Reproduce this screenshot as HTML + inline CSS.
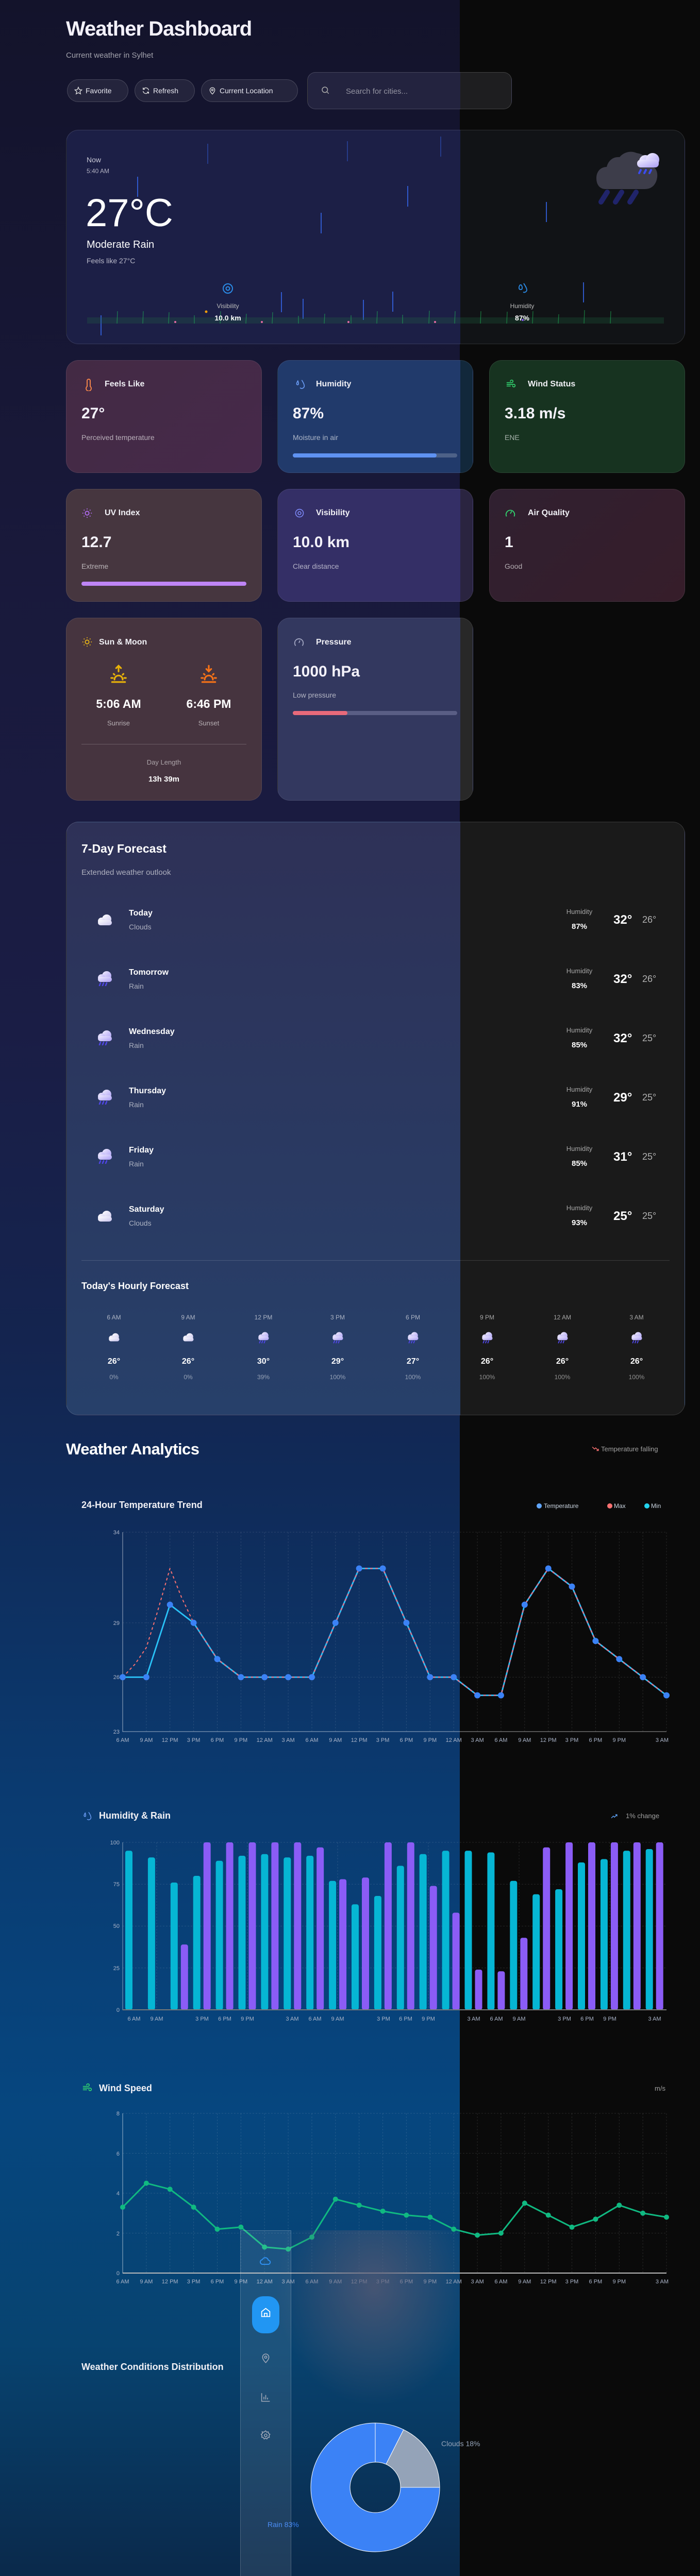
<!DOCTYPE html>
<html><head><meta charset="utf-8">
<style>
*{margin:0;padding:0;box-sizing:border-box}
html,body{width:1358px;height:5256px;overflow:hidden}
body{background:#0a0a0a;font-family:"Liberation Sans",sans-serif;color:#fff;position:relative}
.a{position:absolute;line-height:1;white-space:nowrap}
#bgl{position:absolute;left:0;top:0;width:892px;height:5256px;
background:linear-gradient(180deg,#13132b 0px,#19193b 1100px,#1a1d45 2000px,#14244f 2600px,#0f2c5b 2950px,#0a3b71 3500px,#06467f 4100px,#074370 4550px,#0a2c4f 4950px,#0b1c33 5256px)}
.card{position:absolute;border-radius:24px;border:1px solid rgba(255,255,255,0.09)}
.ct{font-size:16px;font-weight:bold;color:#f1f1f6}
.cv{font-size:30px;font-weight:bold;color:#f4f2fa}
.cs{font-size:14px;color:rgba(255,255,255,0.62)}
.bar{position:absolute;height:8px;border-radius:4px}
.btn{position:absolute;top:154px;height:44px;border-radius:22px;background:#24243c;border:1px solid rgba(255,255,255,0.16);font-size:14px;color:#e8e8f0;display:flex;align-items:center;gap:6px;padding-left:13px}
.fn{font-size:16px;font-weight:bold;color:#fff}
.fs{font-size:14px;color:rgba(255,255,255,0.6)}
.hl{font-size:13px;color:rgba(255,255,255,0.6);text-align:center;width:80px}
.hv{font-size:15px;font-weight:bold;text-align:center;width:80px}
.th{font-size:24px;font-weight:bold}
.tl{font-size:18px;color:rgba(255,255,255,0.65)}
.ht{font-size:12px;color:rgba(255,255,255,0.6);text-align:center;width:80px}
.hT{font-size:16px;font-weight:bold;text-align:center;width:80px}
.hp{font-size:12px;color:rgba(255,255,255,0.5);text-align:center;width:80px}
.h2{font-size:18px;font-weight:bold;color:#f1f1f6}
svg text{font-family:"Liberation Sans",sans-serif}
</style></head><body>
<div id="bgl"></div>
<svg width="0" height="0" style="position:absolute">
<defs>
<linearGradient id="cg" x1="0" y1="0" x2="1" y2="1"><stop offset="0" stop-color="#ffffff"/><stop offset="1" stop-color="#c9c4ee"/></linearGradient>
<linearGradient id="rg" x1="0" y1="0" x2="1" y2="1"><stop offset="0" stop-color="#f1eeff"/><stop offset="1" stop-color="#a99cf5"/></linearGradient>
<symbol id="cloud" viewBox="0 0 40 30"><circle cx="24" cy="13" r="9" fill="url(#cg)"/><circle cx="14" cy="17" r="7" fill="url(#cg)"/><rect x="7" y="15" width="27" height="10" rx="5" fill="url(#cg)"/></symbol>
<symbol id="rain" viewBox="0 0 40 30"><circle cx="24" cy="10" r="9" fill="url(#rg)"/><circle cx="14" cy="14" r="7" fill="url(#rg)"/><rect x="7" y="12" width="27" height="10" rx="5" fill="url(#rg)"/><path d="M12 24l-2 5M18 24l-2 5M24 24l-2 5" stroke="#4f46e5" stroke-width="2.6" stroke-linecap="round"/></symbol>
</defs></svg>

<!-- Header -->
<div class="a" style="left:128px;top:36px;font-size:40px;font-weight:bold;letter-spacing:-1px;color:#f3f1fa">Weather Dashboard</div>
<div class="a" style="left:128px;top:100px;font-size:15px;color:rgba(255,255,255,0.6)">Current weather in Sylhet</div>
<div class="btn" style="left:130px;width:119px"><svg width="16" height="16" viewBox="0 0 24 24" fill="none" stroke="#ddd" stroke-width="2"><path d="M12 2l3 7 7 .6-5.3 4.6 1.7 7.3L12 17.8 5.6 21.5l1.7-7.3L2 9.6 9 9z"/></svg>Favorite</div>
<div class="btn" style="left:261px;width:117px"><svg width="16" height="16" viewBox="0 0 24 24" fill="none" stroke="#ddd" stroke-width="2"><path d="M20 11a8 8 0 0 0-14-4.5L4 8M4 3v5h5M4 13a8 8 0 0 0 14 4.5L20 16M20 21v-5h-5"/></svg>Refresh</div>
<div class="btn" style="left:390px;width:188px"><svg width="16" height="16" viewBox="0 0 24 24" fill="none" stroke="#ddd" stroke-width="2"><path d="M12 22s7-6.5 7-12a7 7 0 0 0-14 0c0 5.5 7 12 7 12z"/><circle cx="12" cy="10" r="2.5"/></svg>Current Location</div>
<div style="position:absolute;left:596px;top:140px;width:397px;height:72px;border-radius:16px;border:1px solid rgba(255,255,255,0.16);background:linear-gradient(90deg,#23233f 0 296px,#1e1e20 296px)"></div>
<svg class="a" style="left:622px;top:166px" width="18" height="18" viewBox="0 0 24 24" fill="none" stroke="#aaa" stroke-width="2"><circle cx="11" cy="11" r="7"/><path d="M16 16l5 5"/></svg>
<div class="a" style="left:671px;top:170px;font-size:15px;color:rgba(255,255,255,0.5)">Search for cities...</div>

<!-- Hero -->
<div class="card" style="left:128px;top:252px;width:1201px;height:416px;background:linear-gradient(90deg,#1c1f46 0 764px,#111316 764px);border-color:rgba(255,255,255,0.12)"></div>
<svg class="a" style="left:0;top:0" width="1358" height="700">
<g stroke="#3465e6" stroke-width="2" opacity="0.85">
<line x1="403" y1="279" x2="403" y2="318" opacity=".5"/><line x1="674" y1="274" x2="674" y2="313" opacity=".5"/><line x1="855" y1="265" x2="855" y2="304" opacity=".5"/>
<line x1="267" y1="343" x2="267" y2="382"/><line x1="791" y1="361" x2="791" y2="401"/><line x1="623" y1="413" x2="623" y2="453"/><line x1="1060" y1="392" x2="1060" y2="431"/>
<line x1="546" y1="567" x2="546" y2="606"/><line x1="588" y1="580" x2="588" y2="619"/><line x1="705" y1="582" x2="705" y2="621"/><line x1="762" y1="566" x2="762" y2="605"/><line x1="1132" y1="548" x2="1132" y2="587"/><line x1="196" y1="612" x2="196" y2="651"/>
</g>
<rect x="169" y="616" width="1119" height="12" fill="#1e6b45" opacity="0.25"/>
<g stroke="#22c55e" stroke-width="1.3" opacity="0.55">
<line x1="227" y1="628" x2="228" y2="604"/><line x1="277" y1="628" x2="278" y2="604"/><line x1="327" y1="628" x2="328" y2="606"/><line x1="377" y1="628" x2="377" y2="612"/><line x1="427" y1="628" x2="428" y2="604"/><line x1="477" y1="628" x2="478" y2="609"/><line x1="528" y1="628" x2="529" y2="606"/><line x1="579" y1="628" x2="579" y2="613"/><line x1="629" y1="628" x2="630" y2="609"/><line x1="681" y1="628" x2="681" y2="612"/><line x1="731" y1="628" x2="732" y2="604"/><line x1="781" y1="628" x2="781" y2="611"/><line x1="832" y1="628" x2="833" y2="603"/><line x1="882" y1="628" x2="883" y2="604"/><line x1="932" y1="628" x2="933" y2="604"/><line x1="983" y1="628" x2="984" y2="605"/><line x1="1033" y1="628" x2="1034" y2="604"/><line x1="1083" y1="628" x2="1084" y2="610"/><line x1="1133" y1="628" x2="1134" y2="602"/><line x1="1184" y1="628" x2="1185" y2="604"/>
</g>
<g fill="#e36aa5"><circle cx="340" cy="625" r="2"/><circle cx="508" cy="625" r="2"/><circle cx="676" cy="625" r="2"/><circle cx="844" cy="625" r="2"/><circle cx="1014" cy="621" r="2" fill="#8b5cf6"/></g>
<circle cx="400" cy="605" r="2.5" fill="#f59e0b"/>
<!-- visibility icon -->
<circle cx="442" cy="560" r="9" fill="none" stroke="#2b8ce8" stroke-width="2"/><circle cx="442" cy="560" r="3.5" fill="none" stroke="#2b8ce8" stroke-width="2"/>
<path d="M1009 553c-3 4-3 9 1 9s4-5 1-9zM1016 550c3 5 6 9 6 13a5 5 0 0 1-7 4" fill="none" stroke="#2b8ce8" stroke-width="1.8"/>
</svg>
<div class="a" style="left:168px;top:303px;font-size:14px;color:#c8c8d6">Now</div>
<div class="a" style="left:168px;top:326px;font-size:12px;color:#b0b0c0">5:40 AM</div>
<div class="a" style="left:166px;top:376px;font-size:76px;color:#fff">27°C</div>
<div class="a" style="left:168px;top:465px;font-size:20px;color:#fff">Moderate Rain</div>
<div class="a" style="left:168px;top:499px;font-size:14px;color:#b8b8c8">Feels like 27°C</div>
<div class="a" style="left:402px;top:588px;width:80px;text-align:center;font-size:12px;color:#bbb">Visibility</div>
<div class="a" style="left:402px;top:610px;width:80px;text-align:center;font-size:14px;font-weight:bold">10.0 km</div>
<div class="a" style="left:973px;top:588px;width:80px;text-align:center;font-size:12px;color:#bbb">Humidity</div>
<div class="a" style="left:973px;top:610px;width:80px;text-align:center;font-size:14px;font-weight:bold">87%</div>
<svg class="a" style="left:1140px;top:280px" width="160" height="130" viewBox="0 0 160 130">
<path d="M35 87c-12 0-18-9-18-21 0-14 9-22 20-22 3-12 12-20 25-19 8-10 22-13 33-8 14 2 26 12 28 25 10 3 13 12 12 22-2 14-10 23-24 23z" fill="#3d3d4a"/>
<g stroke="#20246a" stroke-width="10" stroke-linecap="round"><path d="M38 93l-12 19M66 93l-12 19M94 93l-12 19"/></g>
<circle cx="112" cy="33" r="12" fill="url(#rg)"/><circle cx="126" cy="30" r="13" fill="url(#rg)"/><rect x="96" y="30" width="42" height="15" rx="7" fill="url(#rg)"/>
<g stroke="#3b4cf0" stroke-width="4" stroke-linecap="round"><path d="M103 50l-3 6M113 50l-3 6M123 50l-3 6"/></g>
</svg>

<!-- Stat cards -->
<div class="card" style="left:128px;top:699px;width:380px;height:219px;background:linear-gradient(135deg,#432a44,#46294a)"></div>
<div class="card" style="left:538px;top:699px;width:380px;height:219px;background:linear-gradient(90deg,#213a6b 0 354px,#12283b 354px)"></div>
<div class="card" style="left:949px;top:699px;width:380px;height:219px;background:#173320"></div>
<div class="card" style="left:128px;top:949px;width:380px;height:219px;background:#46363f"></div>
<div class="card" style="left:538px;top:949px;width:380px;height:219px;background:linear-gradient(90deg,#342f66 0 354px,#2a2440 354px)"></div>
<div class="card" style="left:949px;top:949px;width:380px;height:219px;background:linear-gradient(135deg,#302030,#361d2a)"></div>
<div class="card" style="left:128px;top:1199px;width:380px;height:355px;background:#46343f"></div>
<div class="card" style="left:538px;top:1199px;width:380px;height:355px;background:linear-gradient(90deg,#33385f 0 354px,#282828 354px)"></div>

<!-- card contents -->
<svg class="a" style="left:164px;top:735px" width="16" height="24" viewBox="0 0 16 24" fill="none" stroke="#f0834a" stroke-width="2"><path d="M5 15V4a3 3 0 0 1 6 0v11a5 5 0 1 1-6 0z"/></svg>
<div class="a ct" style="left:203px;top:738px">Feels Like</div>
<div class="a cv" style="left:158px;top:788px">27°</div>
<div class="a cs" style="left:158px;top:842px">Perceived temperature</div>

<svg class="a" style="left:572px;top:735px" width="20" height="22" viewBox="0 0 24 24" fill="none" stroke="#6a9cf5" stroke-width="2"><path d="M7 4c-3 5-4 8-1 9s3-4 1-9zM16 2c4 6 6 10 6 14a6 6 0 0 1-10 4"/></svg>
<div class="a ct" style="left:613px;top:738px">Humidity</div>
<div class="a cv" style="left:568px;top:788px">87%</div>
<div class="a cs" style="left:568px;top:842px">Moisture in air</div>
<div class="bar" style="left:568px;top:880px;width:319px;background:rgba(255,255,255,0.2)"></div>
<div class="bar" style="left:568px;top:880px;width:279px;background:#5f92f2"></div>

<svg class="a" style="left:980px;top:736px" width="22" height="20" viewBox="0 0 24 24" fill="none" stroke="#32d46f" stroke-width="2" stroke-linecap="round"><path d="M3 8h11a3 3 0 1 0-3-3M3 12h16a3 3 0 1 1-3 3M3 16h8"/></svg>
<div class="a ct" style="left:1024px;top:738px">Wind Status</div>
<div class="a cv" style="left:979px;top:788px">3.18 m/s</div>
<div class="a cs" style="left:979px;top:842px">ENE</div>

<svg class="a" style="left:158px;top:985px" width="22" height="22" viewBox="0 0 24 24" fill="none" stroke="#b06af0" stroke-width="2"><circle cx="12" cy="12" r="4"/><path d="M12 2v2M12 20v2M2 12h2M20 12h2M5 5l1.4 1.4M17.6 17.6L19 19M5 19l1.4-1.4M17.6 6.4L19 5" stroke-dasharray="2 1"/></svg>
<div class="a ct" style="left:203px;top:988px">UV Index</div>
<div class="a cv" style="left:158px;top:1038px">12.7</div>
<div class="a cs" style="left:158px;top:1092px">Extreme</div>
<div class="bar" style="left:158px;top:1129px;width:320px;background:#be85f5"></div>

<svg class="a" style="left:570px;top:986px" width="22" height="20" viewBox="0 0 24 24" fill="none" stroke="#7a86f4" stroke-width="2"><circle cx="12" cy="12" r="9"/><circle cx="12" cy="12" r="3.5"/></svg>
<div class="a ct" style="left:613px;top:988px">Visibility</div>
<div class="a cv" style="left:568px;top:1038px">10.0 km</div>
<div class="a cs" style="left:568px;top:1092px">Clear distance</div>

<svg class="a" style="left:979px;top:985px" width="22" height="22" viewBox="0 0 24 24" fill="none" stroke="#32d46f" stroke-width="2"><path d="M4 19a9 9 0 1 1 16 0M12 13l3-5"/></svg>
<div class="a ct" style="left:1024px;top:988px">Air Quality</div>
<div class="a cv" style="left:979px;top:1038px">1</div>
<div class="a cs" style="left:979px;top:1092px">Good</div>

<svg class="a" style="left:158px;top:1235px" width="22" height="22" viewBox="0 0 24 24" fill="none" stroke="#e5b318" stroke-width="2"><circle cx="12" cy="12" r="4"/><path d="M12 2v2M12 20v2M2 12h2M20 12h2M5 5l1.4 1.4M17.6 17.6L19 19M5 19l1.4-1.4M17.6 6.4L19 5" stroke-dasharray="2 1"/></svg>
<div class="a ct" style="left:192px;top:1239px">Sun &amp; Moon</div>
<svg class="a" style="left:211px;top:1289px" width="38" height="38" viewBox="0 0 24 24" fill="none" stroke="#eab308" stroke-width="2" stroke-linecap="round"><path d="M12 2v7M9 5l3-3 3 3M4 22h16M7 19a5 5 0 0 1 10 0M3 17h2M19 17h2M6 12l1 1M18 12l-1 1"/></svg>
<svg class="a" style="left:386px;top:1289px" width="38" height="38" viewBox="0 0 24 24" fill="none" stroke="#f97316" stroke-width="2" stroke-linecap="round"><path d="M12 2v7M9 6l3 3 3-3M4 22h16M7 19a5 5 0 0 1 10 0M3 17h2M19 17h2M6 12l1 1M18 12l-1 1"/></svg>
<div class="a" style="left:170px;top:1355px;width:120px;text-align:center;font-size:23px;font-weight:bold">5:06 AM</div>
<div class="a" style="left:345px;top:1355px;width:120px;text-align:center;font-size:23px;font-weight:bold">6:46 PM</div>
<div class="a" style="left:170px;top:1397px;width:120px;text-align:center;font-size:13px;color:rgba(255,255,255,0.6)">Sunrise</div>
<div class="a" style="left:345px;top:1397px;width:120px;text-align:center;font-size:13px;color:rgba(255,255,255,0.6)">Sunset</div>
<div style="position:absolute;left:158px;top:1444px;width:320px;height:1px;background:rgba(255,255,255,0.2)"></div>
<div class="a" style="left:158px;top:1473px;width:320px;text-align:center;font-size:13px;color:rgba(255,255,255,0.55)">Day Length</div>
<div class="a" style="left:158px;top:1505px;width:320px;text-align:center;font-size:15px;font-weight:bold">13h 39m</div>

<svg class="a" style="left:569px;top:1235px" width="22" height="22" viewBox="0 0 24 24" fill="none" stroke="#a0a4c0" stroke-width="2"><path d="M5 20a9 9 0 1 1 14 0M12 14l2-5"/></svg>
<div class="a ct" style="left:613px;top:1239px">Pressure</div>
<div class="a cv" style="left:568px;top:1289px">1000 hPa</div>
<div class="a cs" style="left:568px;top:1342px">Low pressure</div>
<div class="bar" style="left:568px;top:1380px;width:319px;background:#5a5e85"></div>
<div class="bar" style="left:568px;top:1380px;width:106px;background:#e86a7a"></div>

<!-- 7 day -->
<div class="card" style="left:128px;top:1595px;width:1201px;height:1152px;background:linear-gradient(90deg,transparent 0 764px,#1a1a1a 764px),linear-gradient(180deg,#2e3157,#27406a);border-color:rgba(255,255,255,0.14)"></div>
<div class="a" style="left:158px;top:1636px;font-size:23px;font-weight:bold">7-Day Forecast</div>
<div class="a" style="left:158px;top:1686px;font-size:15px;color:rgba(255,255,255,0.6)">Extended weather outlook</div>

<svg class="a" style="left:183px;top:1771px" width="40" height="30"><use href="#cloud"/></svg>
<div class="a fn" style="left:250px;top:1765px">Today</div><div class="a fs" style="left:250px;top:1792px">Clouds</div>
<div class="a hl" style="left:1084px;top:1763px">Humidity</div><div class="a hv" style="left:1084px;top:1791px">87%</div>
<div class="a th" style="left:1190px;top:1774px">32°</div><div class="a tl" style="left:1246px;top:1776px">26°</div>

<svg class="a" style="left:183px;top:1884px" width="40" height="30"><use href="#rain"/></svg>
<div class="a fn" style="left:250px;top:1880px">Tomorrow</div><div class="a fs" style="left:250px;top:1907px">Rain</div>
<div class="a hl" style="left:1084px;top:1878px">Humidity</div><div class="a hv" style="left:1084px;top:1906px">83%</div>
<div class="a th" style="left:1190px;top:1889px">32°</div><div class="a tl" style="left:1246px;top:1891px">26°</div>

<svg class="a" style="left:183px;top:1999px" width="40" height="30"><use href="#rain"/></svg>
<div class="a fn" style="left:250px;top:1995px">Wednesday</div><div class="a fs" style="left:250px;top:2022px">Rain</div>
<div class="a hl" style="left:1084px;top:1993px">Humidity</div><div class="a hv" style="left:1084px;top:2021px">85%</div>
<div class="a th" style="left:1190px;top:2004px">32°</div><div class="a tl" style="left:1246px;top:2006px">25°</div>

<svg class="a" style="left:183px;top:2114px" width="40" height="30"><use href="#rain"/></svg>
<div class="a fn" style="left:250px;top:2110px">Thursday</div><div class="a fs" style="left:250px;top:2137px">Rain</div>
<div class="a hl" style="left:1084px;top:2108px">Humidity</div><div class="a hv" style="left:1084px;top:2136px">91%</div>
<div class="a th" style="left:1190px;top:2119px">29°</div><div class="a tl" style="left:1246px;top:2121px">25°</div>

<svg class="a" style="left:183px;top:2229px" width="40" height="30"><use href="#rain"/></svg>
<div class="a fn" style="left:250px;top:2225px">Friday</div><div class="a fs" style="left:250px;top:2252px">Rain</div>
<div class="a hl" style="left:1084px;top:2223px">Humidity</div><div class="a hv" style="left:1084px;top:2251px">85%</div>
<div class="a th" style="left:1190px;top:2234px">31°</div><div class="a tl" style="left:1246px;top:2236px">25°</div>

<svg class="a" style="left:183px;top:2346px" width="40" height="30"><use href="#cloud"/></svg>
<div class="a fn" style="left:250px;top:2340px">Saturday</div><div class="a fs" style="left:250px;top:2367px">Clouds</div>
<div class="a hl" style="left:1084px;top:2338px">Humidity</div><div class="a hv" style="left:1084px;top:2366px">93%</div>
<div class="a th" style="left:1190px;top:2349px">25°</div><div class="a tl" style="left:1246px;top:2351px">25°</div>

<div style="position:absolute;left:158px;top:2446px;width:1141px;height:1px;background:rgba(255,255,255,0.15)"></div>
<div class="a" style="left:158px;top:2487px;font-size:18px;font-weight:bold">Today's Hourly Forecast</div>

<div class="a ht" style="left:181px;top:2551px">6 AM</div><svg class="a" style="left:206px;top:2584px" width="30" height="24"><use href="#cloud"/></svg><div class="a hT" style="left:181px;top:2635px">26°</div><div class="a hp" style="left:181px;top:2667px">0%</div>
<div class="a ht" style="left:325px;top:2551px">9 AM</div><svg class="a" style="left:350px;top:2584px" width="30" height="24"><use href="#cloud"/></svg><div class="a hT" style="left:325px;top:2635px">26°</div><div class="a hp" style="left:325px;top:2667px">0%</div>
<div class="a ht" style="left:471px;top:2551px">12 PM</div><svg class="a" style="left:496px;top:2584px" width="30" height="24"><use href="#rain"/></svg><div class="a hT" style="left:471px;top:2635px">30°</div><div class="a hp" style="left:471px;top:2667px">39%</div>
<div class="a ht" style="left:615px;top:2551px">3 PM</div><svg class="a" style="left:640px;top:2584px" width="30" height="24"><use href="#rain"/></svg><div class="a hT" style="left:615px;top:2635px">29°</div><div class="a hp" style="left:615px;top:2667px">100%</div>
<div class="a ht" style="left:761px;top:2551px">6 PM</div><svg class="a" style="left:786px;top:2584px" width="30" height="24"><use href="#rain"/></svg><div class="a hT" style="left:761px;top:2635px">27°</div><div class="a hp" style="left:761px;top:2667px">100%</div>
<div class="a ht" style="left:905px;top:2551px">9 PM</div><svg class="a" style="left:930px;top:2584px" width="30" height="24"><use href="#rain"/></svg><div class="a hT" style="left:905px;top:2635px">26°</div><div class="a hp" style="left:905px;top:2667px">100%</div>
<div class="a ht" style="left:1051px;top:2551px">12 AM</div><svg class="a" style="left:1076px;top:2584px" width="30" height="24"><use href="#rain"/></svg><div class="a hT" style="left:1051px;top:2635px">26°</div><div class="a hp" style="left:1051px;top:2667px">100%</div>
<div class="a ht" style="left:1195px;top:2551px">3 AM</div><svg class="a" style="left:1220px;top:2584px" width="30" height="24"><use href="#rain"/></svg><div class="a hT" style="left:1195px;top:2635px">26°</div><div class="a hp" style="left:1195px;top:2667px">100%</div>

<!-- Analytics -->
<div class="a" style="left:128px;top:2797px;font-size:31px;font-weight:bold;letter-spacing:-0.5px">Weather Analytics</div>
<svg class="a" style="left:1148px;top:2805px" width="14" height="14" viewBox="0 0 24 24" fill="none" stroke="#f87171" stroke-width="2.5"><path d="M2 6l7 7 4-4 9 9M22 12v6h-6"/></svg>
<div class="a" style="left:1166px;top:2806px;font-size:13px;color:rgba(255,255,255,0.6)">Temperature falling</div>

<div class="a h2" style="left:158px;top:2912px">24-Hour Temperature Trend</div>
<svg class="a" style="left:1040px;top:2916px" width="260" height="14">
<circle cx="6" cy="7" r="5" fill="#60a5fa"/><text x="15" y="11" font-size="12" fill="#cbd5e1">Temperature</text>
<circle cx="143" cy="7" r="5" fill="#f87171"/><text x="151" y="11" font-size="12" fill="#cbd5e1">Max</text>
<circle cx="215" cy="7" r="5" fill="#22d3ee"/><text x="223" y="11" font-size="12" fill="#cbd5e1">Min</text>
</svg>
<svg class="a" style="left:0;top:2960px" width="1358" height="440">
<g stroke="rgba(255,255,255,0.12)" stroke-dasharray="3 3">
<line x1="238" y1="14" x2="1293" y2="14"/><line x1="238" y1="189.9" x2="1293" y2="189.9"/><line x1="238" y1="295.4" x2="1293" y2="295.4"/>
<line x1="283.9" y1="14" x2="283.9" y2="401"/><line x1="329.7" y1="14" x2="329.7" y2="401"/><line x1="375.6" y1="14" x2="375.6" y2="401"/><line x1="421.5" y1="14" x2="421.5" y2="401"/><line x1="467.4" y1="14" x2="467.4" y2="401"/><line x1="513.2" y1="14" x2="513.2" y2="401"/><line x1="559.1" y1="14" x2="559.1" y2="401"/><line x1="605" y1="14" x2="605" y2="401"/><line x1="650.8" y1="14" x2="650.8" y2="401"/><line x1="696.7" y1="14" x2="696.7" y2="401"/><line x1="742.6" y1="14" x2="742.6" y2="401"/><line x1="788.4" y1="14" x2="788.4" y2="401"/><line x1="834.3" y1="14" x2="834.3" y2="401"/><line x1="880.2" y1="14" x2="880.2" y2="401"/><line x1="926.1" y1="14" x2="926.1" y2="401"/><line x1="971.9" y1="14" x2="971.9" y2="401"/><line x1="1017.8" y1="14" x2="1017.8" y2="401"/><line x1="1063.7" y1="14" x2="1063.7" y2="401"/><line x1="1109.5" y1="14" x2="1109.5" y2="401"/><line x1="1155.4" y1="14" x2="1155.4" y2="401"/><line x1="1201.3" y1="14" x2="1201.3" y2="401"/><line x1="1247.1" y1="14" x2="1247.1" y2="401"/><line x1="1293" y1="14" x2="1293" y2="401"/>
</g>
<path d="M238 14V401H1293" fill="none" stroke="rgba(255,255,255,0.6)"/>
<g font-size="11" fill="#aab4c8" text-anchor="end"><text x="232" y="18">34</text><text x="232" y="194">29</text><text x="232" y="299">26</text><text x="232" y="405">23</text></g>
<polyline fill="none" stroke="#3b82f6" stroke-width="3" stroke-linejoin="round" points="238,295.4 283.9,295.4 329.7,154.7 375.6,189.9 421.5,260.3 467.4,295.4 513.2,295.4 559.1,295.4 605,295.4 650.8,189.9 696.7,84.4 742.6,84.4 788.4,189.9 834.3,295.4 880.2,295.4 926.1,330.6 971.9,330.6 1017.8,154.7 1063.7,84.4 1109.5,119.5 1155.4,225.1 1201.3,260.3 1247.1,295.4 1293,330.6"/>
<polyline fill="none" stroke="#22d3ee" stroke-width="2" stroke-linejoin="round" points="238,295.4 283.9,295.4 329.7,154.7 375.6,189.9 421.5,260.3 467.4,295.4 513.2,295.4 559.1,295.4 605,295.4 650.8,189.9 696.7,84.4 742.6,84.4 788.4,189.9 834.3,295.4 880.2,295.4 926.1,330.6 971.9,330.6 1017.8,154.7 1063.7,84.4 1109.5,119.5 1155.4,225.1 1201.3,260.3 1247.1,295.4 1293,330.6"/>
<polyline fill="none" stroke="#f87171" stroke-width="2" stroke-dasharray="5 5" stroke-linejoin="round" points="238,295.4 262,270 283.9,238 305,170 329.7,84.4 352,140 375.6,189.9 421.5,260.3 467.4,295.4 513.2,295.4 559.1,295.4 605,295.4 650.8,189.9 696.7,84.4 742.6,84.4 788.4,189.9 834.3,295.4 880.2,295.4 926.1,330.6 971.9,330.6 1017.8,154.7 1063.7,84.4 1109.5,119.5 1155.4,225.1 1201.3,260.3 1247.1,295.4 1293,330.6"/>
<g fill="#3b82f6"><circle cx="238" cy="295.4" r="6"/><circle cx="283.9" cy="295.4" r="6"/><circle cx="329.7" cy="154.7" r="6"/><circle cx="375.6" cy="189.9" r="6"/><circle cx="421.5" cy="260.3" r="6"/><circle cx="467.4" cy="295.4" r="6"/><circle cx="513.2" cy="295.4" r="6"/><circle cx="559.1" cy="295.4" r="6"/><circle cx="605" cy="295.4" r="6"/><circle cx="650.8" cy="189.9" r="6"/><circle cx="696.7" cy="84.4" r="6"/><circle cx="742.6" cy="84.4" r="6"/><circle cx="788.4" cy="189.9" r="6"/><circle cx="834.3" cy="295.4" r="6"/><circle cx="880.2" cy="295.4" r="6"/><circle cx="926.1" cy="330.6" r="6"/><circle cx="971.9" cy="330.6" r="6"/><circle cx="1017.8" cy="154.7" r="6"/><circle cx="1063.7" cy="84.4" r="6"/><circle cx="1109.5" cy="119.5" r="6"/><circle cx="1155.4" cy="225.1" r="6"/><circle cx="1201.3" cy="260.3" r="6"/><circle cx="1247.1" cy="295.4" r="6"/><circle cx="1293" cy="330.6" r="6"/></g>
<g font-size="11" fill="#aab4c8" text-anchor="middle"><text x="238" y="421">6 AM</text><text x="283.9" y="421">9 AM</text><text x="329.7" y="421">12 PM</text><text x="375.6" y="421">3 PM</text><text x="421.5" y="421">6 PM</text><text x="467.4" y="421">9 PM</text><text x="513.2" y="421">12 AM</text><text x="559.1" y="421">3 AM</text><text x="605" y="421">6 AM</text><text x="650.8" y="421">9 AM</text><text x="696.7" y="421">12 PM</text><text x="742.6" y="421">3 PM</text><text x="788.4" y="421">6 PM</text><text x="834.3" y="421">9 PM</text><text x="880.2" y="421">12 AM</text><text x="926.1" y="421">3 AM</text><text x="971.9" y="421">6 AM</text><text x="1017.8" y="421">9 AM</text><text x="1063.7" y="421">12 PM</text><text x="1109.5" y="421">3 PM</text><text x="1155.4" y="421">6 PM</text><text x="1201.3" y="421">9 PM</text><text x="1297" y="421" text-anchor="end">3 AM</text></g>
</svg>

<!-- Humidity & Rain -->
<svg class="a" style="left:160px;top:3514px" width="18" height="22" viewBox="0 0 24 24" fill="none" stroke="#6a9cf5" stroke-width="2"><path d="M7 4c-3 5-4 8-1 9s3-4 1-9zM16 2c4 6 6 10 6 14a6 6 0 0 1-10 4"/></svg>
<div class="a h2" style="left:192px;top:3515px">Humidity &amp; Rain</div>
<svg class="a" style="left:1185px;top:3519px" width="13" height="13" viewBox="0 0 24 24" fill="none" stroke="#60a5fa" stroke-width="2.5"><path d="M2 18l7-7 4 4 9-9M22 12V6h-6"/></svg>
<div class="a" style="left:1214px;top:3518px;font-size:13px;color:rgba(255,255,255,0.6)">1% change</div>
<svg class="a" style="left:0;top:3560px" width="1358" height="380">
<g stroke="rgba(255,255,255,0.12)" stroke-dasharray="3 3"><line x1="238" y1="16" x2="1293" y2="16"/><line x1="238" y1="97.25" x2="1293" y2="97.25"/><line x1="238" y1="178.5" x2="1293" y2="178.5"/><line x1="238" y1="259.75" x2="1293" y2="259.75"/>
<line x1="480" y1="16" x2="480" y2="341"/><line x1="655" y1="16" x2="655" y2="341"/><line x1="831" y1="16" x2="831" y2="341"/><line x1="1007" y1="16" x2="1007" y2="341"/><line x1="1183" y1="16" x2="1183" y2="341"/><line x1="304" y1="16" x2="304" y2="341"/></g>
<path d="M238 16V341H1293" fill="none" stroke="rgba(255,255,255,0.5)"/>
<g font-size="11" fill="#aab4c8" text-anchor="end"><text x="232" y="20">100</text><text x="232" y="101">75</text><text x="232" y="182">50</text><text x="232" y="264">25</text><text x="232" y="345">0</text></g>
<g fill="#06b6d4">
<rect x="243" y="32.25" width="14" height="308.75" rx="4"/><rect x="286.9" y="45.25" width="14" height="295.75" rx="4"/><rect x="330.8" y="94" width="14" height="247" rx="4"/><rect x="374.7" y="81" width="14" height="260" rx="4"/><rect x="418.6" y="51.75" width="14" height="289.25" rx="4"/><rect x="462.5" y="42" width="14" height="299" rx="4"/><rect x="506.4" y="38.75" width="14" height="302.25" rx="4"/><rect x="550.3" y="45.25" width="14" height="295.75" rx="4"/><rect x="594.2" y="42" width="14" height="299" rx="4"/><rect x="638.1" y="90.75" width="14" height="250.25" rx="4"/><rect x="682" y="136.25" width="14" height="204.75" rx="4"/><rect x="725.9" y="120" width="14" height="221" rx="4"/><rect x="769.8" y="61.5" width="14" height="279.5" rx="4"/><rect x="813.7" y="38.75" width="14" height="302.25" rx="4"/><rect x="857.6" y="32.25" width="14" height="308.75" rx="4"/><rect x="901.5" y="32.25" width="14" height="308.75" rx="4"/><rect x="945.4" y="35.5" width="14" height="305.5" rx="4"/><rect x="989.3" y="90.75" width="14" height="250.25" rx="4"/><rect x="1033.2" y="116.75" width="14" height="224.25" rx="4"/><rect x="1077.1" y="107" width="14" height="234" rx="4"/><rect x="1121" y="55" width="14" height="286" rx="4"/><rect x="1164.9" y="48.5" width="14" height="292.5" rx="4"/><rect x="1208.8" y="32.25" width="14" height="308.75" rx="4"/><rect x="1252.7" y="29" width="14" height="312" rx="4"/>
</g>
<g fill="#8b5cf6">
<rect x="350.8" y="214.25" width="14" height="126.75" rx="4"/><rect x="394.7" y="16" width="14" height="325" rx="4"/><rect x="438.6" y="16" width="14" height="325" rx="4"/><rect x="482.5" y="16" width="14" height="325" rx="4"/><rect x="526.4" y="16" width="14" height="325" rx="4"/><rect x="570.3" y="16" width="14" height="325" rx="4"/><rect x="614.2" y="25.75" width="14" height="315.25" rx="4"/><rect x="658.1" y="87.5" width="14" height="253.5" rx="4"/><rect x="702" y="84.25" width="14" height="256.75" rx="4"/><rect x="745.9" y="16" width="14" height="325" rx="4"/><rect x="789.8" y="16" width="14" height="325" rx="4"/><rect x="833.7" y="100.5" width="14" height="240.5" rx="4"/><rect x="877.6" y="152.5" width="14" height="188.5" rx="4"/><rect x="921.5" y="263" width="14" height="78" rx="4"/><rect x="965.4" y="266.25" width="14" height="74.75" rx="4"/><rect x="1009.3" y="201.25" width="14" height="139.75" rx="4"/><rect x="1053.2" y="25.75" width="14" height="315.25" rx="4"/><rect x="1097.1" y="16" width="14" height="325" rx="4"/><rect x="1141" y="16" width="14" height="325" rx="4"/><rect x="1184.9" y="16" width="14" height="325" rx="4"/><rect x="1228.8" y="16" width="14" height="325" rx="4"/><rect x="1272.7" y="16" width="14" height="325" rx="4"/>
</g>
<line x1="238" y1="341" x2="1293" y2="341" stroke="#777" stroke-width="2"/>
<g font-size="11" fill="#aab4c8" text-anchor="middle"><text x="260" y="362">6 AM</text><text x="304" y="362">9 AM</text><text x="392" y="362">3 PM</text><text x="436" y="362">6 PM</text><text x="480" y="362">9 PM</text><text x="567" y="362">3 AM</text><text x="611" y="362">6 AM</text><text x="655" y="362">9 AM</text><text x="744" y="362">3 PM</text><text x="787" y="362">6 PM</text><text x="831" y="362">9 PM</text><text x="919" y="362">3 AM</text><text x="963" y="362">6 AM</text><text x="1007" y="362">9 AM</text><text x="1095" y="362">3 PM</text><text x="1139" y="362">6 PM</text><text x="1183" y="362">9 PM</text><text x="1270" y="362">3 AM</text></g>
</svg>

<!-- Wind speed -->
<svg class="a" style="left:159px;top:4043px" width="20" height="20" viewBox="0 0 24 24" fill="none" stroke="#32d46f" stroke-width="2" stroke-linecap="round"><path d="M3 8h11a3 3 0 1 0-3-3M3 12h16a3 3 0 1 1-3 3M3 16h8"/></svg>
<div class="a h2" style="left:192px;top:4044px">Wind Speed</div>
<div class="a" style="left:1270px;top:4047px;font-size:13px;color:rgba(255,255,255,0.6)">m/s</div>
<svg class="a" style="left:0;top:4090px" width="1358" height="360">
<g stroke="rgba(255,255,255,0.12)" stroke-dasharray="3 3"><line x1="238" y1="12" x2="1293" y2="12"/><line x1="238" y1="89.5" x2="1293" y2="89.5"/><line x1="238" y1="167" x2="1293" y2="167"/><line x1="238" y1="244.5" x2="1293" y2="244.5"/>
<line x1="283.9" y1="12" x2="283.9" y2="322"/><line x1="329.7" y1="12" x2="329.7" y2="322"/><line x1="375.6" y1="12" x2="375.6" y2="322"/><line x1="421.5" y1="12" x2="421.5" y2="322"/><line x1="467.4" y1="12" x2="467.4" y2="322"/><line x1="513.2" y1="12" x2="513.2" y2="322"/><line x1="559.1" y1="12" x2="559.1" y2="322"/><line x1="605" y1="12" x2="605" y2="322"/><line x1="650.8" y1="12" x2="650.8" y2="322"/><line x1="696.7" y1="12" x2="696.7" y2="322"/><line x1="742.6" y1="12" x2="742.6" y2="322"/><line x1="788.4" y1="12" x2="788.4" y2="322"/><line x1="834.3" y1="12" x2="834.3" y2="322"/><line x1="880.2" y1="12" x2="880.2" y2="322"/><line x1="926.1" y1="12" x2="926.1" y2="322"/><line x1="971.9" y1="12" x2="971.9" y2="322"/><line x1="1017.8" y1="12" x2="1017.8" y2="322"/><line x1="1063.7" y1="12" x2="1063.7" y2="322"/><line x1="1109.5" y1="12" x2="1109.5" y2="322"/><line x1="1155.4" y1="12" x2="1155.4" y2="322"/><line x1="1201.3" y1="12" x2="1201.3" y2="322"/><line x1="1247.1" y1="12" x2="1247.1" y2="322"/><line x1="1293" y1="12" x2="1293" y2="322"/></g>
<path d="M238 12V322H1293" fill="none" stroke="rgba(255,255,255,0.6)"/>
<g font-size="11" fill="#aab4c8" text-anchor="end"><text x="232" y="16">8</text><text x="232" y="94">6</text><text x="232" y="171">4</text><text x="232" y="249">2</text><text x="232" y="326">0</text></g>
<polyline fill="none" stroke="#10b981" stroke-width="3" stroke-linejoin="round" points="238,194.1 283.9,147.6 329.7,159.3 375.6,194.1 421.5,236.8 467.4,232.9 513.2,271.6 559.1,275.5 605,252.3 650.8,178.6 696.7,190.3 742.6,201.9 788.4,209.6 834.3,213.5 880.2,236.8 926.1,248.4 971.9,244.5 1017.8,186.4 1063.7,209.6 1109.5,232.9 1155.4,217.4 1201.3,190.3 1247.1,205.75 1293,213.5"/>
<g fill="#10b981"><circle cx="238" cy="194.1" r="5"/><circle cx="283.9" cy="147.6" r="5"/><circle cx="329.7" cy="159.3" r="5"/><circle cx="375.6" cy="194.1" r="5"/><circle cx="421.5" cy="236.8" r="5"/><circle cx="467.4" cy="232.9" r="5"/><circle cx="513.2" cy="271.6" r="5"/><circle cx="559.1" cy="275.5" r="5"/><circle cx="605" cy="252.3" r="5"/><circle cx="650.8" cy="178.6" r="5"/><circle cx="696.7" cy="190.3" r="5"/><circle cx="742.6" cy="201.9" r="5"/><circle cx="788.4" cy="209.6" r="5"/><circle cx="834.3" cy="213.5" r="5"/><circle cx="880.2" cy="236.8" r="5"/><circle cx="926.1" cy="248.4" r="5"/><circle cx="971.9" cy="244.5" r="5"/><circle cx="1017.8" cy="186.4" r="5"/><circle cx="1063.7" cy="209.6" r="5"/><circle cx="1109.5" cy="232.9" r="5"/><circle cx="1155.4" cy="217.4" r="5"/><circle cx="1201.3" cy="190.3" r="5"/><circle cx="1247.1" cy="205.75" r="5"/><circle cx="1293" cy="213.5" r="5"/></g>
<line x1="238" y1="322" x2="1293" y2="322" stroke="#bbb" stroke-width="2"/>
<g font-size="11" fill="#aab4c8" text-anchor="middle"><text x="238" y="342">6 AM</text><text x="283.9" y="342">9 AM</text><text x="329.7" y="342">12 PM</text><text x="375.6" y="342">3 PM</text><text x="421.5" y="342">6 PM</text><text x="467.4" y="342">9 PM</text><text x="513.2" y="342">12 AM</text><text x="559.1" y="342">3 AM</text><text x="605" y="342">6 AM</text><text x="650.8" y="342">9 AM</text><text x="696.7" y="342">12 PM</text><text x="742.6" y="342">3 PM</text><text x="788.4" y="342">6 PM</text><text x="834.3" y="342">9 PM</text><text x="880.2" y="342">12 AM</text><text x="926.1" y="342">3 AM</text><text x="971.9" y="342">6 AM</text><text x="1017.8" y="342">9 AM</text><text x="1063.7" y="342">12 PM</text><text x="1109.5" y="342">3 PM</text><text x="1155.4" y="342">6 PM</text><text x="1201.3" y="342">9 PM</text><text x="1297" y="342" text-anchor="end">3 AM</text></g>
</svg>

<!-- glow -->
<div style="position:absolute;left:466px;top:4329px;width:426px;height:420px;background:radial-gradient(ellipse 190px 230px at 260px 110px,rgba(90,90,115,0.75),rgba(90,90,115,0.35) 55%,rgba(90,90,115,0) 100%)"></div>

<!-- Conditions -->
<div class="a h2" style="left:158px;top:4585px">Weather Conditions Distribution</div>
<svg class="a" style="left:590px;top:4690px" width="300" height="280" viewBox="590 4690 300 280">
<path d="M728 4703 A125 125 0 0 1 783 4716 L749 4783 A49 49 0 0 0 728 4779 Z" fill="#3b82f6" stroke="#fff" stroke-width="1"/>
<path d="M783 4716 A125 125 0 0 1 853 4828 L777 4828 A49 49 0 0 0 749 4783 Z" fill="#94a3b8" stroke="#fff" stroke-width="1"/>
<path d="M853 4828 A125 125 0 1 1 728 4703 L728 4779 A49 49 0 1 0 777 4828 Z" fill="#3b82f6" stroke="#fff" stroke-width="1"/>
</svg>
<div class="a" style="left:856px;top:4736px;font-size:14px;color:#94a3b8">Clouds 18%</div>
<div class="a" style="left:519px;top:4893px;font-size:14px;color:#3b82f6">Rain 83%</div>

<div style="position:absolute;left:158px;top:5056px;width:1141px;height:60px;border-radius:14px;background:linear-gradient(90deg,rgba(255,255,255,0.06) 0 734px,#141414 734px)"></div>
<div style="position:absolute;left:174px;top:5077px;width:18px;height:18px;border-radius:50%;background:#94a3b8"></div>
<div class="a" style="left:207px;top:5078px;font-size:16px;color:#e6e6ee">Clouds</div>
<div class="a" style="left:1180px;top:5077px;width:104px;text-align:right;font-size:14px;color:rgba(255,255,255,0.6)"><b style="font-size:18px;color:#fff">7</b> hours</div>
<div style="position:absolute;left:158px;top:5136px;width:1141px;height:60px;border-radius:14px;background:linear-gradient(90deg,rgba(255,255,255,0.06) 0 734px,#141414 734px)"></div>
<div style="position:absolute;left:174px;top:5157px;width:18px;height:18px;border-radius:50%;background:#3b82f6"></div>
<div class="a" style="left:207px;top:5158px;font-size:16px;color:#e6e6ee">Rain</div>
<div class="a" style="left:1180px;top:5157px;width:104px;text-align:right;font-size:14px;color:rgba(255,255,255,0.6)"><b style="font-size:18px;color:#fff">33</b> hours</div>

<!-- Sidebar -->
<div style="position:absolute;left:466px;top:4329px;width:99px;height:927px;background:rgba(255,255,255,0.09);border:1px solid rgba(255,255,255,0.2)"></div>
<svg class="a" style="left:502px;top:4376px" width="26" height="24" viewBox="0 0 24 24" fill="none" stroke="#2f8ff0" stroke-width="2"><path d="M7 19h10a4 4 0 0 0 .5-8A6 6 0 0 0 6 10a4.5 4.5 0 0 0 1 9z"/></svg>
<div style="position:absolute;left:489px;top:4457px;width:53px;height:72px;border-radius:22px;background:#2196f3"></div>
<svg class="a" style="left:505px;top:4478px" width="21" height="21" viewBox="0 0 24 24" fill="none" stroke="#fff" stroke-width="2"><path d="M3 10l9-7 9 7v11H3zM9 21v-7h6v7"/></svg>
<svg class="a" style="left:505px;top:4565px" width="21" height="24" viewBox="0 0 24 24" fill="none" stroke="#a0a8b8" stroke-width="1.8"><path d="M12 22s7-6.5 7-12a7 7 0 0 0-14 0c0 5.5 7 12 7 12z"/><circle cx="12" cy="10" r="2.5"/></svg>
<svg class="a" style="left:505px;top:4642px" width="21" height="22" viewBox="0 0 24 24" fill="none" stroke="#a0a8b8" stroke-width="1.8"><path d="M3 3v18h18M8 17v-6M12 17V7M16 17v-4"/></svg>
<svg class="a" style="left:505px;top:4716px" width="21" height="22" viewBox="0 0 24 24" fill="none" stroke="#a0a8b8" stroke-width="1.8"><circle cx="12" cy="12" r="3"/><path d="M12 2l2 3 3.5-.8.8 3.5 3 2-2 3 .8 3.5-3.5.8-2 3-3-2-3 2-2-3-3.5-.8.8-3.5-2-3 3-2-.8-3.5 3.5.8z"/></svg>
<div style="position:absolute;left:489px;top:5171px;width:53px;height:55px;border-radius:18px;background:#4b5566"></div>
<svg class="a" style="left:505px;top:5188px" width="21" height="21" viewBox="0 0 24 24" fill="none" stroke="#fff" stroke-width="2"><circle cx="12" cy="12" r="4"/><path d="M12 2v2M12 20v2M2 12h2M20 12h2M5 5l1.4 1.4M17.6 17.6L19 19M5 19l1.4-1.4M17.6 6.4L19 5"/></svg>
</body></html>
